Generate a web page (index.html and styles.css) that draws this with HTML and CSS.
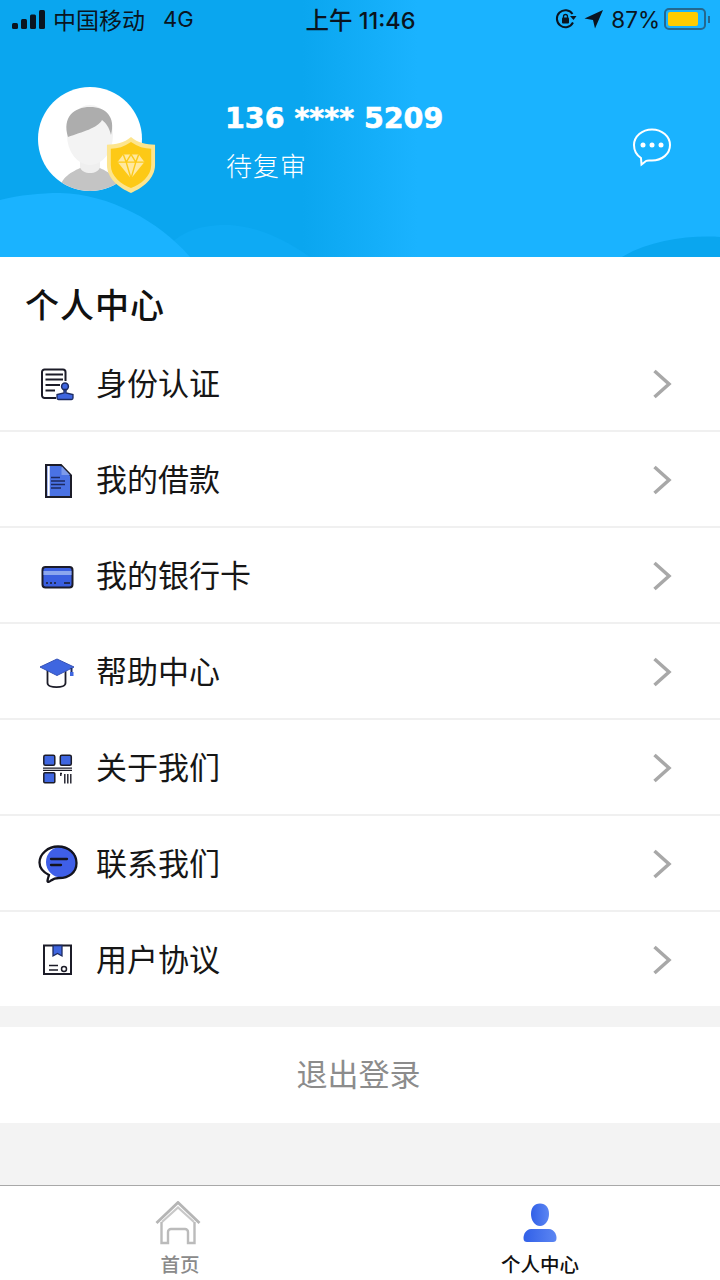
FILE: index.html
```html
<!DOCTYPE html>
<html>
  <head>
    <meta charset="utf-8" />
    <title>个人中心</title>
    <link rel="stylesheet" href="styles.css">
  </head>
  <body>
    <div class="page">
      <header class="header">
        <svg class="waves" width="720" height="257" viewBox="0 0 720 257">
          <path d="M160 257 C175 232 200 224 230 225 C260 227 285 240 310 257 Z" fill="#0eaaf4" />
          <path d="M0 200 C20 195 40 193 60 193 C110 194 160 222 190 257 L0 257 Z" fill="#1ab3ff" />
          <path d="M622 257 C650 240 690 235 720 237 L720 257 Z" fill="#0aa6ef" />
        </svg>
        <div class="status-bar">
          <div class="status-left">
            <svg class="signal" width="33" height="20" viewBox="0 0 33 20">
              <rect x="0" y="13" width="6" height="6" rx="1.500" />
              <rect x="9" y="9" width="6" height="10" rx="1.500" />
              <rect x="18" y="4.500" width="6" height="14.500" rx="1.500" />
              <rect x="27" y="0" width="6" height="19" rx="1.500" />
            </svg>
            <span class="carrier">中国移动</span>
            <span class="network">4G</span>
          </div>
          <div class="status-time">上午 11:46</div>
          <div class="status-right">
            <svg width="22" height="22" viewBox="0 0 22 22">
              <path d="M18 14.500 A8.500 8.500 0 1 1 17.500 6" fill="none" stroke="#0a1420" stroke-width="2" />
              <path d="M15 8 L21.500 8 L18.500 12 Z" fill="#0a1420" />
              <rect x="7" y="9.500" width="7" height="6" rx="1" fill="#0a1420" />
              <path d="M8.500 10 V8.500 a2 2 0 0 1 4 0 V10" fill="none" stroke="#0a1420" stroke-width="1.300" />
            </svg>
            <svg class="arrow" width="20" height="20" viewBox="0 0 20 20">
              <path d="M19 1 L0.500 9.500 L9 11 L11 19.500 Z" fill="#0a1420" />
            </svg>
            <span class="percent">87%</span>
            <div class="battery"><div class="battery-fill"></div></div>
            <div class="battery-cap"></div>
          </div>
        </div>
        <div class="profile">
          <div class="avatar">
            <svg width="104" height="104" viewBox="0 0 104 104">
              <defs>
                <clipPath id="avatarClip"><circle cx="52" cy="52" r="52" /></clipPath>
              </defs>
              <circle cx="52" cy="52" r="52" fill="#fff" />
              <g clip-path="url(#avatarClip)">
                <path d="M22 104 C22 90 34 85 44 80 L60 80 C70 85 82 90 82 104 Z" fill="#c4c4c4" />
                <path d="M42 68 H62 V80 C60 88 44 88 42 80 Z" fill="#efefef" />
                <ellipse cx="52" cy="48" rx="23" ry="30" fill="#f3f3f3" />
                <path d="M30 50 C24 30 36 20 52 20 C68 20 78 30 73 48 C71 40 68 36 64 33 C60 41 44 45 30 50 Z" fill="#adadad" />
              </g>
            </svg>
            <svg class="shield" width="50" height="58" viewBox="0 0 52 60">
              <path d="M26 1 C33 7 42 9 51 9 V30 C51 44 38 54 26 59 C14 54 1 44 1 30 V9 C10 9 19 7 26 1 Z" fill="#fde58e" />
              <path d="M26 6 C33 11 40 13 47 13 V30 C47 42 36 50 26 54 C16 50 5 42 5 30 V13 C12 13 19 11 26 6 Z" fill="#fdc916" />
              <path d="M18 19 H34 L40 27 L26 44 L12 27 Z" fill="#ffe9a0" />
              <path d="M12 27 H40 M21 27 L26 44 L31 27 M18 19 L21 27 L26 19 L31 27 L34 19" fill="none" stroke="#fdc916" stroke-width="1.500" />
            </svg>
          </div>
          <div class="user-info">
            <div class="phone">136 **** 5209</div>
            <div class="user-state">待复审</div>
          </div>
          <svg class="message" width="40" height="40" viewBox="0 0 40 40">
            <path d="M20 2.500 C30 2.500 38 9.500 38 18 C38 27 30 33.500 20 33.500 C17.500 33.500 15.500 33 14 34 L9.500 37.500 L9 31 C4.500 28 2 23.500 2 18 C2 9.500 10 2.500 20 2.500 Z" fill="none" stroke="#fff" stroke-width="2" />
            <circle cx="11" cy="18" r="2.500" fill="#fff" />
            <circle cx="20" cy="18" r="2.500" fill="#fff" />
            <circle cx="29" cy="18" r="2.500" fill="#fff" />
          </svg>
        </div>
      </header>

      <section class="menu">
        <h2 class="menu-title">个人中心</h2>
        <div class="menu-row">
          <svg class="menu-icon" width="36" height="36" viewBox="0 0 36 36">
            <path d="M17 31 H5.500 a2.500 2.500 0 0 1 -2.500 -2.500 V5 A2.500 2.500 0 0 1 5.500 2.500 H24 a2.500 2.500 0 0 1 2.500 2.500 V14" fill="none" stroke="#1c1c28" stroke-width="2" />
            <path d="M6.500 7.500 H24 M6.500 12.500 H24 M6.500 18 H21 M6.500 23.500 H16" stroke="#1c1c28" stroke-width="1.800" />
            <circle cx="26" cy="19.500" r="3.400" fill="#3f66e0" stroke="#1c2a60" stroke-width="1.500" />
            <path d="M25 22.500 H27 V26 L34 27.500 V31 A1.500 1.500 0 0 1 32.500 32.500 H19.500 A1.500 1.500 0 0 1 18 31 V27.500 L25 26 Z" fill="#3f66e0" stroke="#1c2a60" stroke-width="1.300" />
          </svg>
          <span class="menu-label">身份认证</span>
          <svg class="chevron" width="20" height="30" viewBox="0 0 20 30"><path d="M2.500 2 L17 15 L2.500 28" /></svg>
        </div>
        <div class="menu-row">
          <svg class="menu-icon" width="36" height="36" viewBox="0 0 36 36">
            <path d="M7 2 H22 L32 12.500 V34 H7 Z" fill="#4a72e4" stroke="#1c1c28" stroke-width="2" />
            <path d="M22.500 3 V12 H31" fill="#7d9bec" />
            <rect x="8.500" y="3" width="2.200" height="30" fill="#fff" />
            <path d="M12 14.500 H21 M12 18 H26 M12 21.500 H26 M12 25 H22" stroke="#1c2a60" stroke-width="1.500" />
          </svg>
          <span class="menu-label">我的借款</span>
          <svg class="chevron" width="20" height="30" viewBox="0 0 20 30"><path d="M2.500 2 L17 15 L2.500 28" /></svg>
        </div>
        <div class="menu-row">
          <svg class="menu-icon" width="36" height="36" viewBox="0 0 36 36">
            <rect x="3.500" y="8" width="30" height="20.500" rx="3" fill="#3a5fe0" stroke="#1c1c28" stroke-width="2" />
            <rect x="4.500" y="12" width="28" height="4" fill="#8ba6ee" />
            <path d="M7 24 H9 M11 24 H13 M15 24 H17 M25 24 H31" stroke="#1c1c28" stroke-width="1.500" />
          </svg>
          <span class="menu-label">我的银行卡</span>
          <svg class="chevron" width="20" height="30" viewBox="0 0 20 30"><path d="M2.500 2 L17 15 L2.500 28" /></svg>
        </div>
        <div class="menu-row">
          <svg class="menu-icon" width="36" height="36" viewBox="0 0 36 36">
            <path d="M8.500 15 V28 C8.500 33.500 26.500 33.500 26.500 28 V15" fill="#fff" stroke="#1c1c28" stroke-width="1.800" />
            <path d="M18 4 L35 12 L18 20.500 L1 12 Z" fill="#3f66e0" stroke="#3552b8" stroke-width="1" />
            <path d="M32.500 13 V19" stroke="#1c2a60" stroke-width="2" />
            <rect x="31" y="17" width="3.500" height="4" fill="#3f66e0" />
          </svg>
          <span class="menu-label">帮助中心</span>
          <svg class="chevron" width="20" height="30" viewBox="0 0 20 30"><path d="M2.500 2 L17 15 L2.500 28" /></svg>
        </div>
        <div class="menu-row">
          <svg class="menu-icon" width="36" height="36" viewBox="0 0 36 36">
            <rect x="4.800" y="4.300" width="11" height="10" rx="1.500" fill="#3f66e0" stroke="#1c1c28" stroke-width="1.500" />
            <rect x="21.300" y="4.300" width="11" height="10" rx="1.500" fill="#3f66e0" stroke="#1c1c28" stroke-width="1.500" />
            <rect x="4.800" y="21.800" width="11" height="10" rx="1" fill="#3f66e0" stroke="#1c1c28" stroke-width="1.500" />
            <path d="M4 17.200 H33 M4 19.400 H33" stroke="#1c1c28" stroke-width="1.200" />
            <path d="M21 22.500 H23 M21.800 22.500 V25 M25.800 23 V32.500 M28.800 23 V32.500 M31.800 23 V32.500" stroke="#1c1c28" stroke-width="1.400" />
          </svg>
          <span class="menu-label">关于我们</span>
          <svg class="chevron" width="20" height="30" viewBox="0 0 20 30"><path d="M2.500 2 L17 15 L2.500 28" /></svg>
        </div>
        <div class="menu-row">
          <svg class="menu-icon menu-icon-wide" width="40" height="40" viewBox="0 0 40 40">
            <circle cx="23.500" cy="17" r="15.500" fill="#3f5fe8" />
            <path d="M20 1.500 C31 1.500 38.500 9 38.500 18 C38.500 27.500 31 33 21 33 C18 33 15.500 33.500 13 35.500 C11.500 36.800 9.500 37.500 9.500 36 C9.500 34 10.500 32 11 30 C5 27 1.500 23 1.500 17.500 C1.500 9 10 1.500 20 1.500 Z" fill="none" stroke="#14141e" stroke-width="2.300" />
            <path d="M13 14 H29 M13 20 H23" stroke="#14141e" stroke-width="2.300" stroke-linecap="round" />
          </svg>
          <span class="menu-label">联系我们</span>
          <svg class="chevron" width="20" height="30" viewBox="0 0 20 30"><path d="M2.500 2 L17 15 L2.500 28" /></svg>
        </div>
        <div class="menu-row menu-row-last">
          <svg class="menu-icon" width="36" height="36" viewBox="0 0 36 36">
            <rect x="5" y="2.500" width="27" height="28.500" fill="#fff" stroke="#1c1c28" stroke-width="2" />
            <path d="M14 2.500 H23 V13 L18.500 10.500 L14 13 Z" fill="#3f66e0" stroke="#1c2a60" stroke-width="1.300" />
            <path d="M10 22.500 H19 M10 27 H19" stroke="#1c1c28" stroke-width="1.500" />
            <circle cx="25" cy="26" r="2.500" fill="none" stroke="#1c1c28" stroke-width="1.500" />
          </svg>
          <span class="menu-label">用户协议</span>
          <svg class="chevron" width="20" height="30" viewBox="0 0 20 30"><path d="M2.500 2 L17 15 L2.500 28" /></svg>
        </div>
      </section>

      <div class="logout">退出登录</div>
      <div class="spacer"></div>

      <nav class="tabbar">
        <div class="tab">
          <svg class="tab-icon tab-icon-home" width="46" height="44" viewBox="0 0 46 44">
            <path d="M1.500 22 L23 1.500 L44.500 22" fill="none" stroke="#b5b5b5" stroke-width="2.800" />
            <path d="M7 21 L23 6.500 L39 21" fill="none" stroke="#c8c8c8" stroke-width="2.200" />
            <path d="M6.500 21 V42 H13 V31 A3 3 0 0 1 16 28 H30 A3 3 0 0 1 33 31 V42 H39.500 V21" fill="none" stroke="#bbbbbb" stroke-width="2.400" />
          </svg>
          <span class="tab-label">首页</span>
        </div>
        <div class="tab tab-active">
          <svg class="tab-icon tab-icon-person" width="46" height="44" viewBox="0 0 46 44">
            <defs>
              <linearGradient id="personFill" x1="0" y1="0" x2="1" y2="0">
                <stop offset="0" stop-color="#3160e8" />
                <stop offset="1" stop-color="#5c86f2" />
              </linearGradient>
            </defs>
            <path d="M23 1.500 C29 1.500 32 6 32 12 C32 18 28.500 24 23 24 C17.500 24 14 18 14 12 C14 6 17 1.500 23 1.500 Z" fill="url(#personFill)" />
            <path d="M14 27 H32 C37 27.500 39.500 32 39.500 36 C39.500 39 38 40 36 40 H10 C8 40 6.500 39 6.500 36 C6.500 32 9 27.500 14 27 Z" fill="url(#personFill)" />
          </svg>
          <span class="tab-label">个人中心</span>
        </div>
      </nav>
    </div>
  </body>
</html>
```

FILE: styles.css
```css
* {
  box-sizing: border-box;
}
html,
body {
  margin: 0;
  padding: 0;
}
body {
  width: 720px;
  height: 1280px;
  overflow: hidden;
  font-family: "Noto Sans CJK SC", "Liberation Sans", sans-serif;
  background-color: #f3f3f3;
}
.page {
  display: flex;
  flex-direction: column;
  height: 1280px;
}

/* header */
.header {
  position: relative;
  height: 257px;
  flex-shrink: 0;
  background: linear-gradient(90deg, #0aa6ef 0%, #0aa6ef 42%, #1ab3ff 58%, #1ab3ff 100%);
  overflow: hidden;
}
.waves {
  position: absolute;
  left: 0;
  top: 0;
}
.status-bar {
  position: relative;
  display: grid;
  grid-template-columns: 1fr auto 1fr;
  align-items: center;
  height: 40px;
  padding: 0 10px 0 12px;
  color: #0a1420;
}
.status-left {
  display: flex;
  align-items: center;
  font-size: 23px;
  padding-bottom: 3px;
}
.signal {
  fill: #0a1420;
  margin-right: 8px;
  margin-top: 3px;
}
.network {
  margin-left: 18px;
  font-family: "Inter", sans-serif;
  font-size: 22px;
}
.status-time {
  font-family: "Inter", "Noto Sans CJK SC", sans-serif;
  font-size: 23.500px;
  font-weight: 500;
  padding-bottom: 3px;
  margin-left: -1px;
}
.status-right {
  display: flex;
  align-items: center;
  justify-content: flex-end;
  font-family: "Inter", sans-serif;
  font-size: 22.500px;
  padding-bottom: 2px;
}
.arrow {
  margin-left: 7px;
}
.percent {
  margin-left: 7px;
}
.battery {
  width: 42px;
  height: 22px;
  margin-left: 4px;
  padding: 2px;
  border: 2px solid #24688f;
  border-radius: 5px;
}
.battery-fill {
  width: 30px;
  height: 100%;
  background-color: #ffcc00;
  border-radius: 2px;
}
.battery-cap {
  width: 2px;
  height: 7px;
  margin-left: 2px;
  background-color: #24688f;
}
.profile {
  position: relative;
  display: flex;
  align-items: flex-start;
  padding: 47px 48px 0 38px;
}
.avatar {
  position: relative;
  width: 104px;
  height: 104px;
  flex-shrink: 0;
}
.avatar svg {
  display: block;
}
.avatar .shield {
  position: absolute;
  left: 68px;
  top: 49px;
}
.user-info {
  flex: 1;
  margin-left: 84px;
  color: #fff;
}
.phone {
  margin-top: 8px;
  margin-left: -1px;
  font-family: "DejaVu Sans", sans-serif;
  font-size: 28.500px;
  font-weight: 700;
  line-height: 48px;
  -webkit-text-stroke: 0.600px #fff;
}
.user-state {
  margin-top: 3px;
  font-size: 26px;
  line-height: 38px;
  font-weight: 300;
  letter-spacing: 1px;
}
.message {
  margin-top: 40px;
}

/* menu */
.menu {
  background-color: #fff;
  flex-shrink: 0;
}
.menu-title {
  margin: 0;
  height: 79px;
  padding: 24px 0 0 25px;
  font-size: 34px;
  line-height: 46px;
  font-weight: 500;
  color: #111;
  letter-spacing: 1px;
}
.menu-row {
  display: flex;
  align-items: center;
  height: 96px;
  padding: 0 48px 0 39px;
  border-bottom: 2px solid #f0f0f0;
}
.menu-row-last {
  height: 94px;
  border-bottom: none;
}
.menu-icon {
  flex-shrink: 0;
  margin-top: 3px;
}
.menu-icon-wide {
  margin-left: -1px;
  margin-right: -3px;
}
.menu-label {
  flex: 1;
  margin-left: 21px;
  padding-bottom: 4px;
  font-size: 31px;
  color: #161616;
}
.chevron {
  fill: none;
  stroke: #a8a8a8;
  stroke-width: 3.500;
  margin-top: 2px;
}

/* logout */
.logout {
  margin-top: 21px;
  height: 96px;
  flex-shrink: 0;
  display: flex;
  align-items: center;
  justify-content: center;
  background-color: #fff;
  font-size: 31px;
  color: #8c8c8c;
  padding: 0 3px 6px 0;
}
.spacer {
  flex: 1;
}

/* tabs */
.tabbar {
  display: flex;
  flex-shrink: 0;
  height: 95px;
  background-color: #fff;
  border-top: 1px solid #a8a8a8;
}
.tab {
  flex: 1;
  display: flex;
  flex-direction: column;
  align-items: center;
  padding-top: 15px;
}
.tab-icon {
  display: block;
}
.tab-icon-home {
  margin-right: 4px;
}
.tab-icon-person {
  margin-top: 1px;
  margin-bottom: -1px;
}
.tab-label {
  margin-top: 6px;
  font-size: 19.500px;
  line-height: 26px;
  font-weight: 500;
  color: #8a8a8a;
}
.tab-active .tab-label {
  color: #111;
}
```
